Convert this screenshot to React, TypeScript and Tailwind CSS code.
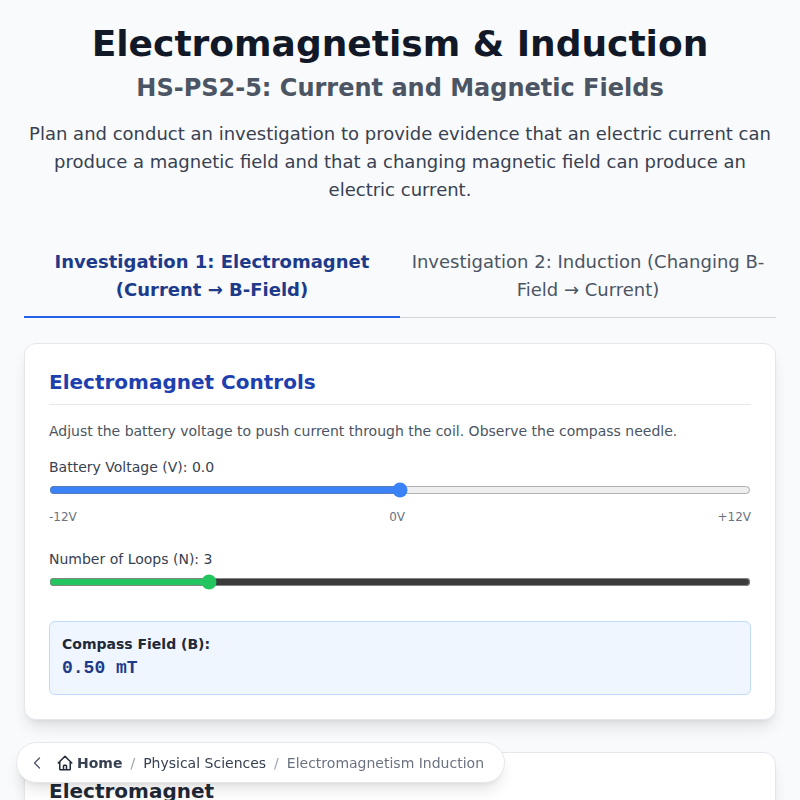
/**
 * Electromagnetism & Induction lesson page, first tab open.
 * Breadcrumb pill floats over the content at the bottom left.
 */
import { ChevronLeft } from "lucide-react";
import { HiOutlineHome } from "react-icons/hi";

const FONT = "font-['DejaVu_Sans',sans-serif]";

function Breadcrumb() {
  return (
    <nav className="fixed bottom-[17px] left-[16px] flex h-[41px] w-[489px] items-center rounded-full border border-[#e5e7eb] bg-white pl-[10px] text-sm shadow-lg">
      <ChevronLeft className="h-[20px] w-[20px] text-[#4b5563]" strokeWidth={1.5} />
      <HiOutlineHome className="ml-[9px] h-[18px] w-[18px] text-[#1f2937]" />
      <span className="ml-[3px] font-bold text-[#374151]">Home</span>
      <span className="mx-[8px] text-[#9ca3af]">/</span>
      <span className="text-[#374151]">Physical Sciences</span>
      <span className="mx-[8px] text-[#9ca3af]">/</span>
      <span className="text-[#6b7280]">Electromagnetism Induction</span>
    </nav>
  );
}

export default function App() {
  return (
    <div className={`${FONT} min-h-screen overflow-hidden bg-[#f9fafb] p-6 text-[#1f2937]`}>
      <header className="text-center">
        <h1 className="text-4xl font-bold leading-[40px] text-[#111827]">Electromagnetism &amp; Induction</h1>
        <h2 className="mt-[8px] text-2xl font-semibold leading-[32px] text-[#4b5563]">
          HS-PS2-5: Current and Magnetic Fields
        </h2>
        <p className="mt-[16px] text-lg leading-[28px] text-[#374151]">
          Plan and conduct an investigation to provide evidence that an electric current can produce a magnetic
          field and that a changing magnetic field can produce an electric current.
        </p>
      </header>

      <div className="mt-[32px] flex border-b border-[#d1d5db]">
        <button
          type="button"
          className="-mb-px flex-1 border-b-2 border-[#2563eb] px-[8px] pb-[12px] pt-[12px] text-lg font-semibold leading-[28px] text-[#1e3a8a]"
        >
          Investigation 1: Electromagnet (Current → B-Field)
        </button>
        <button
          type="button"
          className="-mb-px flex-1 border-b-2 border-transparent px-[8px] pb-[12px] pt-[12px] text-lg leading-[28px] text-[#4b5563]"
        >
          Investigation 2: Induction (Changing B-Field → Current)
        </button>
      </div>

      <section className="mt-[25px] rounded-xl border border-[#e5e7eb] bg-white p-6 shadow-lg">
        <h3 className="border-b border-[#e5e7eb] pb-[8px] text-xl font-semibold leading-[28px] text-[#1e40af]">
          Electromagnet Controls
        </h3>
        <p className="mt-[16px] text-sm leading-[20px] text-[#4b5563]">
          Adjust the battery voltage to push current through the coil. Observe the compass needle.
        </p>

        <label className="mt-[16px] block text-sm leading-[20px] text-[#374151]">Battery Voltage (V): 0.0</label>
        <input
          type="range"
          min={-12}
          max={12}
          step={0.5}
          defaultValue={0}
          className="mt-[5px] block w-full accent-[#3b82f6]"
        />
        <div className="mt-[11px] flex justify-between text-xs leading-[16px] text-[#6b7280]">
          <span>-12V</span>
          <span>0V</span>
          <span>+12V</span>
        </div>

        <label className="mt-[24px] block text-sm leading-[20px] text-[#374151]">Number of Loops (N): 3</label>
        <input
          type="range"
          min={1}
          max={10}
          step={1}
          defaultValue={3}
          className="mt-[5px] block w-full accent-[#22c55e]"
        />

        <div className="mt-[31px] rounded-md border border-[#bfdbfe] bg-[#eff6ff] px-[12px] py-[12px]">
          <div className="text-sm font-semibold leading-[20px] text-[#1f2937]">Compass Field (B):</div>
          <div className="font-['Liberation_Mono',monospace] text-lg font-bold leading-[28px] text-[#1e3a8a]">
            0.50 mT
          </div>
        </div>
      </section>

      <section className="mt-[32px] h-[320px] rounded-xl border border-[#e5e7eb] bg-white p-6 shadow-lg">
        <h3 className="text-xl font-semibold leading-[28px] text-[#1f2937]">Electromagnet</h3>
      </section>

      <Breadcrumb />
    </div>
  );
}
